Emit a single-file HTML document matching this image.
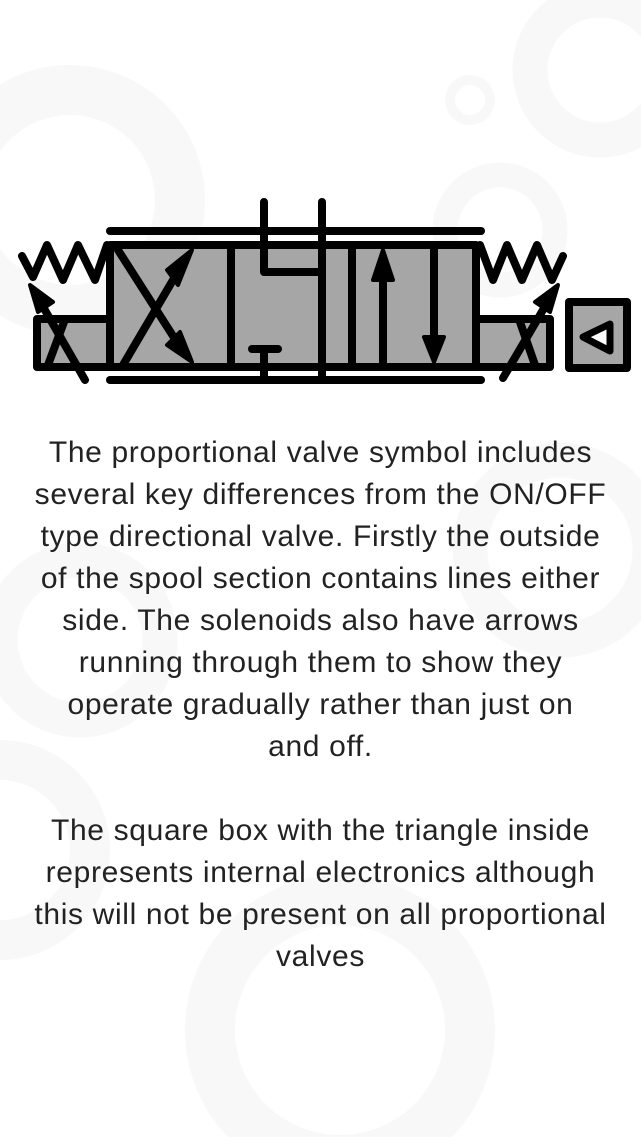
<!DOCTYPE html>
<html><head><meta charset="utf-8"><style>
html,body{margin:0;padding:0;background:#fff;width:641px;height:1137px;overflow:hidden;position:relative}
.bg{position:absolute;left:0;top:0}
p{position:absolute;left:0;width:641px;margin:0;text-align:center;font-family:"Liberation Sans",sans-serif;font-size:30px;letter-spacing:0.65px;line-height:42px;color:#222;white-space:nowrap}
</style></head><body>
<svg class="bg" width="641" height="1137" viewBox="0 0 641 1137">
<g fill="none" stroke="#f8f8f8">
<circle cx="70" cy="200" r="110" stroke-width="50"/>
<circle cx="600" cy="70" r="70" stroke-width="35"/>
<circle cx="500" cy="230" r="55" stroke-width="25"/>
<circle cx="470" cy="100" r="20" stroke-width="10"/>
<circle cx="340" cy="1030" r="130" stroke-width="50"/>
<circle cx="80" cy="640" r="80" stroke-width="35"/>
<circle cx="0" cy="850" r="90" stroke-width="40"/>
<circle cx="560" cy="550" r="90" stroke-width="35"/>
</g>
<g fill="#a6a6a6" stroke="#000" stroke-width="8" stroke-linejoin="round" stroke-linecap="round">
<rect x="37" y="319" width="73" height="48"/>
<rect x="476" y="319" width="74" height="48"/>
<rect x="110" y="245" width="366" height="122"/>
<rect x="569" y="302" width="58" height="66"/>
</g>
<g fill="none" stroke="#000" stroke-width="8" stroke-linecap="round" stroke-linejoin="round">
<line x1="110" y1="231" x2="481" y2="231"/>
<line x1="110" y1="380" x2="481" y2="380"/>
<line x1="231" y1="245" x2="231" y2="367"/>
<line x1="352" y1="245" x2="352" y2="367"/>
<polyline points="264,202 264,272 322,272"/>
<line x1="322" y1="202" x2="322" y2="380"/>
<line x1="264" y1="350" x2="264" y2="380"/>
<line x1="252" y1="349" x2="278" y2="349"/>
<line x1="383" y1="367" x2="383" y2="265"/>
<line x1="434" y1="245" x2="434" y2="345"/>
<line x1="118" y1="250" x2="182" y2="350"/>
<line x1="123" y1="365" x2="183" y2="263"/>
<polyline points="22,256 33,277 47,245 63,280 78,245 95,280 107,245"/>
<polyline points="480,245 493,280 507,245 522,280 537,245 552,280 563,256"/>
<line x1="85" y1="380" x2="38" y2="298"/>
<line x1="64" y1="322" x2="48" y2="365"/>
<line x1="503" y1="378" x2="550" y2="298"/>
<line x1="520" y1="322" x2="535" y2="365"/>
</g>
<g fill="#000" stroke="#000" stroke-width="4" stroke-linejoin="round">
<polygon points="192,250 178,285 167,270"/>
<polygon points="192,362 167,345 180,332"/>
<polygon points="383,250 373,280 393,280"/>
<polygon points="434,362 424,337 444,337"/>
<polygon points="30,285 53,302 38,312"/>
<polygon points="558,285 550,312 535,302"/>
</g>
<polygon points="583,337 610,324 610,351" fill="#fff" stroke="#000" stroke-width="7" stroke-linejoin="round"/>
</svg>
<p style="top:432px">The proportional valve symbol includes<br>several key differences from the ON/OFF<br>type directional valve. Firstly the outside<br>of the spool section contains lines either<br>side. The solenoids also have arrows<br>running through them to show they<br>operate gradually rather than just on<br>and off.</p>
<p style="top:810px">The square box with the triangle inside<br>represents internal electronics although<br>this will not be present on all proportional<br>valves</p>
</body></html>
